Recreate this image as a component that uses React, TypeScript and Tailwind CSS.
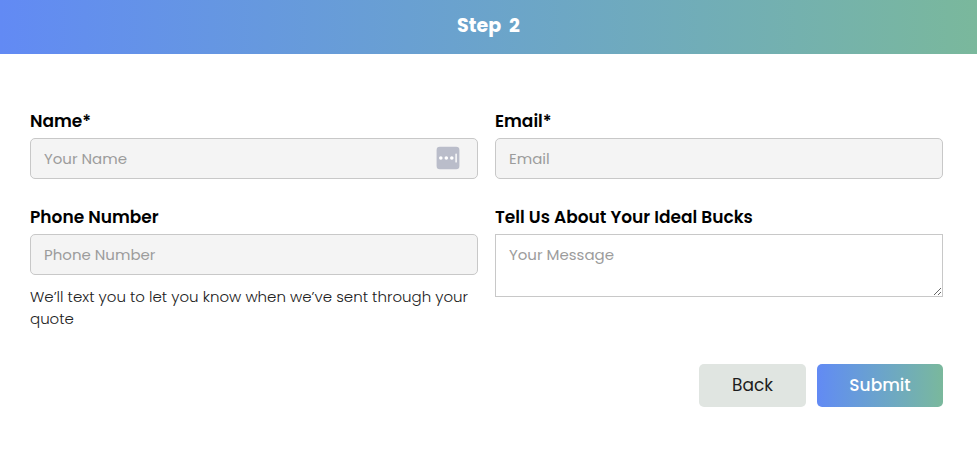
import type { FormEvent } from 'react'

const labelClass = 'block text-[17px] leading-6 font-semibold text-black'
const fieldClass =
  'block w-full h-[41px] rounded-[5px] border border-[#c8c8c8] bg-[#f4f4f4] px-[13px] text-[15px] text-black placeholder:text-[#9c9c9c]'

interface FieldProps {
  id: string
  label: string
  placeholder: string
  type?: string
}

function Field({ id, label, placeholder, type = 'text' }: FieldProps) {
  return (
    <>
      <label htmlFor={id} className={labelClass}>
        {label}
      </label>
      <input id={id} name={id} type={type} placeholder={placeholder} className={`${fieldClass} mt-[5px]`} />
    </>
  )
}

function PasswordManagerIcon() {
  return (
    <svg viewBox="0 0 24 24" className="absolute bottom-[9px] right-[18px] size-6" aria-hidden="true">
      <rect x="0.6" y="0.7" width="22.8" height="22.6" rx="3.2" fill="#babdca" />
      <circle cx="4.8" cy="12" r="1.8" fill="#fff" />
      <circle cx="10.3" cy="12" r="1.8" fill="#fff" />
      <circle cx="15.8" cy="12" r="1.8" fill="#fff" />
      <rect x="19.4" y="7.4" width="1.4" height="9.2" rx="0.7" fill="#fff" />
    </svg>
  )
}

export default function App() {
  const handleSubmit = (e: FormEvent) => e.preventDefault()

  return (
    <main className="bg-white font-[Poppins,Inter,sans-serif]">
      <header className="bg-linear-to-r from-[#628af4] to-[#7ab89c] pt-3 pb-[14px] text-center">
        <h1 className="whitespace-pre text-[19px] leading-7 font-bold text-white">Step  2</h1>
      </header>

      <form onSubmit={handleSubmit} className="pt-[55px] pr-[34px] pb-12 pl-[30px]">
        <div className="grid grid-cols-2 gap-x-[17px] gap-y-[26px]">
          <div className="relative">
            <Field id="name" label="Name*" placeholder="Your Name" />
            <PasswordManagerIcon />
          </div>
          <div>
            <Field id="email" label="Email*" placeholder="Email" type="email" />
          </div>
          <div>
            <Field id="phone" label="Phone Number" placeholder="Phone Number" type="tel" />
            <p className="mt-[11px] text-[15px] leading-[22px] font-light text-[#222]">
              We’ll text you to let you know when we’ve sent through your quote
            </p>
          </div>
          <div>
            <label htmlFor="message" className={labelClass}>
              Tell Us About Your Ideal Bucks
            </label>
            <textarea
              id="message"
              name="message"
              placeholder="Your Message"
              className="mt-[5px] block h-[63px] w-full resize border border-[#c8c8c8] bg-white px-[13px] py-2 text-[15px] leading-6 text-black placeholder:text-[#9c9c9c]"
            />
          </div>
        </div>

        <div className="mt-[34px] flex justify-end gap-[11px]">
          <button
            type="button"
            className="h-[43px] w-[107px] rounded-[5px] bg-[#e0e5e1] text-[17px] text-[#1d1d1d]"
          >
            Back
          </button>
          <button
            type="submit"
            className="h-[43px] w-[126px] rounded-[5px] bg-linear-to-r from-[#628af4] to-[#7ab89c] text-[17px] font-medium text-white"
          >
            Submit
          </button>
        </div>
      </form>
    </main>
  )
}
